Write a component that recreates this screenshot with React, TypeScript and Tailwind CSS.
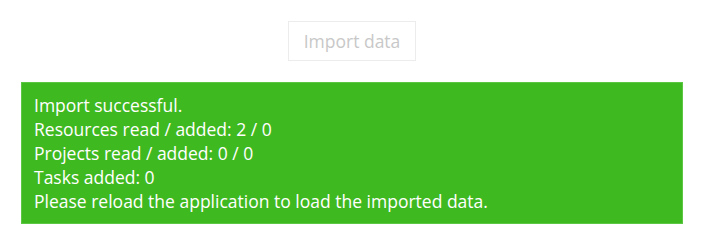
export default function App() {
  return (
    <div className="flex h-[244px] w-[704px] flex-col items-center bg-white px-[21px] pt-[21px] font-['Open_Sans',sans-serif]">
      <button
        className="h-[40px] w-[128px] border border-[#ececec] bg-white text-[17.5px] text-[#c8c8c8]"
        type="button"
        disabled
      >
        Import data
      </button>
      <div className="mt-[21px] w-full border border-[#5cc743] bg-[#3fb920] px-[12px] py-[10px] text-[17.5px] leading-[24px] text-white">
        <div>Import successful.</div>
        <div>Resources read / added: 2 / 0</div>
        <div>Projects read / added: 0 / 0</div>
        <div>Tasks added: 0</div>
        <div>Please reload the application to load the imported data.</div>
      </div>
    </div>
  );
}
